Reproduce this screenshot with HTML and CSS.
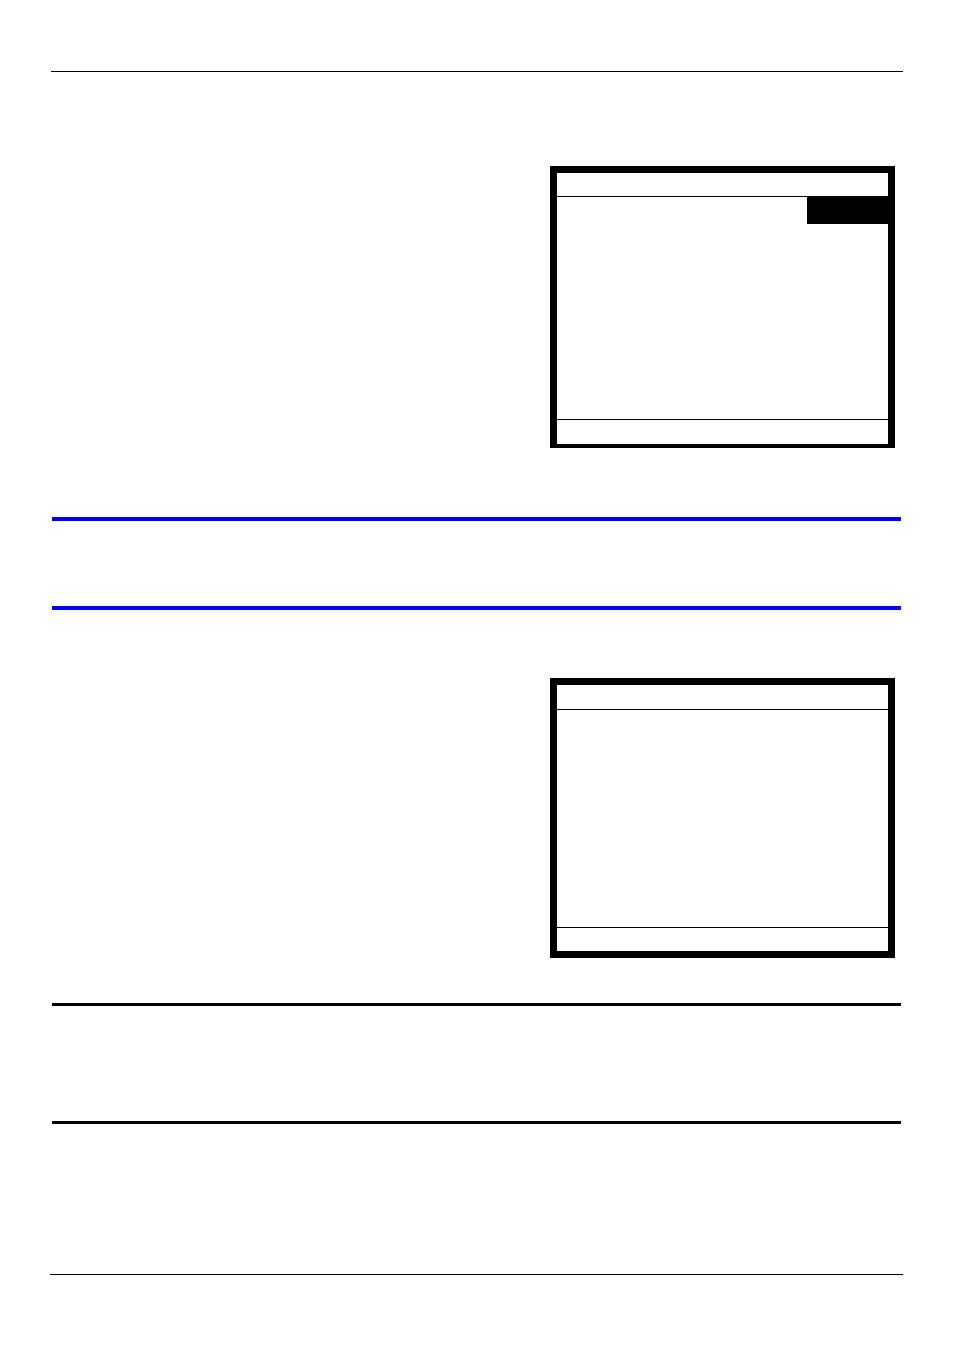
FILE: index.html
```html
<!DOCTYPE html>
<html lang="en">
<head>
<meta charset="utf-8">
<meta name="viewport" content="width=device-width, initial-scale=1">
<title>Page</title>
<link rel="stylesheet" href="styles.css">
</head>
<body>
<div class="page">
  <header class="page-header"></header>
  <main class="content">
    <section class="row row-first">
      <div class="screen screen-menu">
        <div class="screen-title"></div>
        <div class="screen-body"><div class="selected"></div></div>
        <div class="screen-status"></div>
      </div>
    </section>
    <aside class="note note-blue"></aside>
    <section class="row row-second">
      <div class="screen screen-plain">
        <div class="screen-title"></div>
        <div class="screen-body"></div>
        <div class="screen-status"></div>
      </div>
    </section>
    <aside class="note note-black"></aside>
  </main>
  <footer class="page-footer"></footer>
</div>
</body>
</html>
```

FILE: styles.css
```css
* {
  box-sizing: border-box;
}

body {
  margin: 0;
  background: #fff;
  color: #000;
  font-family: "Liberation Sans", Arial, sans-serif;
}

.page {
  display: flex;
  flex-direction: column;
  min-height: 100vh;
  padding: 71px 51px 76px 50px;
}

.page-header {
  margin-left: 1px;
  border-top: 1px solid #000;
}

.content {
  flex: 1;
  padding: 0 2px;
}

.page-footer {
  border-top: 1px solid #000;
}

.row {
  display: flex;
  justify-content: flex-end;
  padding-right: 6px;
}

.row-first {
  padding-top: 94px;
  padding-bottom: 69px;
}

.row-second {
  padding-top: 68px;
  padding-bottom: 45px;
}

/* Framed display panels */
.screen {
  display: flex;
  flex-direction: column;
  width: 345px;
  max-width: 100%;
  border: 7px solid #000;
}

.screen-menu {
  min-height: 282px;
  border-bottom-width: 4px;
}

.screen-plain {
  min-height: 280px;
}

.screen-title {
  height: 24px;
  border-bottom: 1px solid #000;
}

.screen-body {
  display: flex;
  flex: 1;
  justify-content: flex-end;
  align-items: flex-start;
}

.screen-status {
  height: 25px;
  border-top: 1px solid #000;
}

.screen-plain .screen-title {
  height: 25px;
}

.screen-plain .screen-status {
  height: 24px;
}

.selected {
  width: 81px;
  height: 27px;
  background: #000;
}

/* Notes ruled above and below */
.note-blue {
  min-height: 93px;
  border-top: 4px solid #00f;
  border-bottom: 4px solid #00f;
}

.note-black {
  min-height: 121px;
  border-top: 3px solid #000;
  border-bottom: 3px solid #000;
}
```
